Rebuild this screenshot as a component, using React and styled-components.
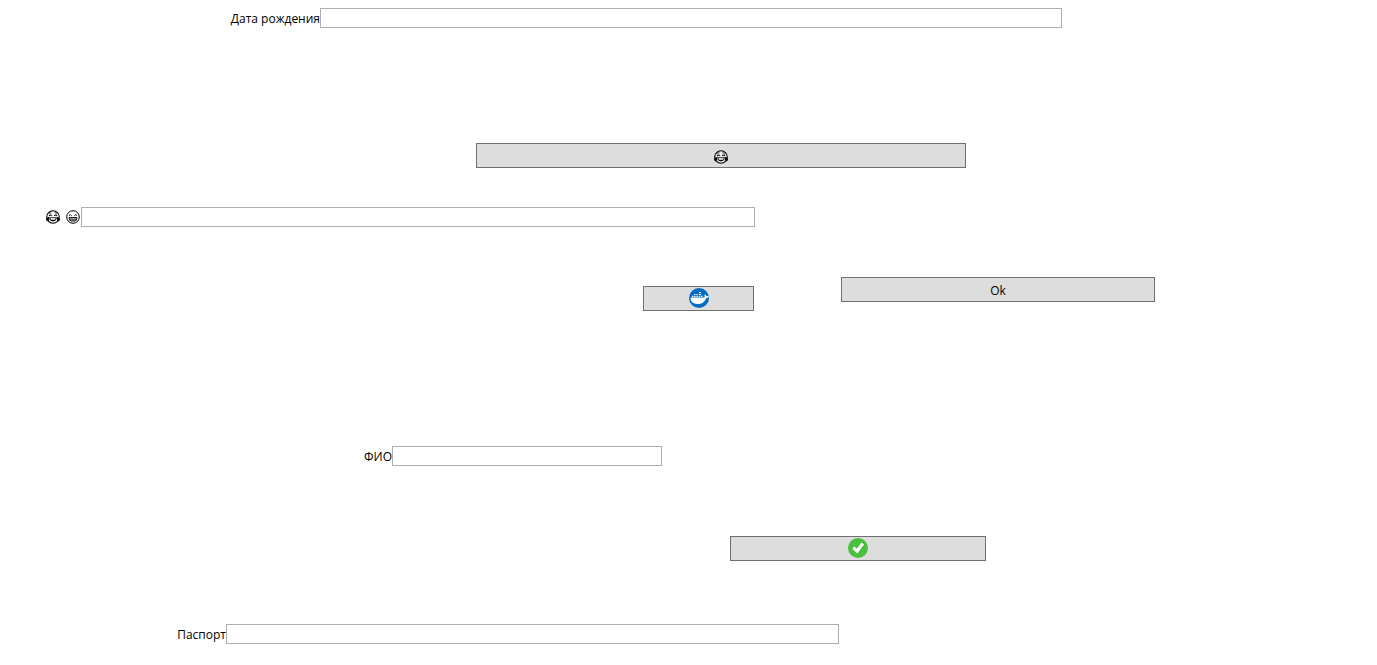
import React from 'react';
import styled, { createGlobalStyle } from 'styled-components';

const GlobalStyle = createGlobalStyle`
  *, *::before, *::after { box-sizing: border-box; }
  body {
    margin: 0;
    background: #fff;
    color: #000;
    font-family: "Segoe UI", "Open Sans", "Noto Sans", sans-serif;
    font-size: 12px;
    line-height: 16px;
  }
`;

const Page = styled.main`
  display: flex;
  flex-direction: column;
  padding: 8px 0 20px;
`;

const Field = styled.div`
  display: grid;
  grid-template-columns: ${(p) => p.$start}px minmax(0, 1fr);
  align-items: center;
  margin-top: ${(p) => p.$gap || 0}px;
  padding-right: ${(p) => p.$end}px;
`;

const Label = styled.label`
  display: flex;
  justify-content: flex-end;
  align-items: center;
  gap: 6px;
  padding: ${(p) => (p.$icons ? '0 1px 0 0' : '2px 0 0')};
  white-space: nowrap;
`;

const TextBox = styled.input`
  width: 100%;
  height: 20px;
  padding: 0 3px;
  border: 1px solid #abadb3;
  border-radius: 0;
  background: #fff;
  font: inherit;
  outline: none;
  &:focus { border-color: #569de5; }
`;

const Actions = styled.div`
  display: flex;
  align-items: flex-start;
  margin-top: ${(p) => p.$gap}px;
  padding: 0 ${(p) => p.$end}px 0 ${(p) => p.$start}px;
`;

const Button = styled.button`
  display: flex;
  flex: ${(p) => (p.$width ? `0 0 ${p.$width}px` : '1 1 0')};
  justify-content: center;
  align-items: center;
  height: 25px;
  margin: ${(p) => p.$drop || 0}px ${(p) => p.$after || 0}px 0 0;
  padding: 2px 0 0;
  border: 1px solid #707070;
  border-radius: 0;
  background: #ddd;
  color: #000;
  font: inherit;
  &:hover { background: #bee6fd; border-color: #3c7fb1; }
`;

const Icon = styled.svg`
  display: block;
  flex: none;
  width: ${(p) => p.$size}px;
  height: ${(p) => p.$size}px;
`;

const Badge = styled(Icon)`
  margin-top: -4px;
`;

const JoyFace = () => (
  <Icon $size={14} viewBox="0 0 14 14" fill="none" stroke="#000" aria-hidden="true">
    <circle cx="7" cy="7" r="6.3" fill="#fff" fillOpacity="0.4" strokeWidth="1.1" />
    <path d="M3 5.9Q4.3 4 5.7 5.9M8.3 5.9Q9.7 4 11 5.9" strokeWidth="1.1" />
    <path d="M3.2 3.4L5.4 2.7M8.6 2.7L10.8 3.4" strokeWidth="0.8" />
    <path d="M3.8 7.7H10.2Q10.2 10.9 7 11.1Q3.8 10.9 3.8 7.7Z" fill="#fff" strokeWidth="0.8" />
    <path d="M4.2 9.8H9.8Q9.2 11.1 7 11.1Q4.8 11.1 4.2 9.8Z" fill="#000" stroke="none" />
    <path d="M3.4 6.7Q0.1 7.4 0.1 9.5Q0.3 11.4 2 11.1Q3.6 10.4 3.4 6.7ZM10.6 6.7Q13.9 7.4 13.9 9.5Q13.7 11.4 12 11.1Q10.4 10.4 10.6 6.7Z" fill="#000" stroke="none" />
  </Icon>
);

const BeamFace = () => (
  <Icon $size={14} viewBox="0 0 14 14" fill="none" stroke="#000" aria-hidden="true">
    <circle cx="7" cy="7" r="6.3" strokeWidth="1" />
    <path d="M3 5.7Q4.3 3.7 5.7 5.7M8.3 5.7Q9.7 3.7 11 5.7" strokeWidth="0.9" />
    <path d="M3 7.5H11Q11 11 8.8 11.1H5.2Q3 11 3 7.5Z" fill="#000" fillOpacity="0.12" strokeWidth="0.9" />
    <path d="M3.3 9.3H10.7M5.1 7.6V11M7 7.6V11M8.9 7.6V11" strokeWidth="0.5" />
  </Icon>
);

const WhaleIcon = () => (
  <Badge $size={20} viewBox="0 0 20 20" aria-hidden="true">
    <circle cx="10" cy="10" r="10" fill="#066bc3" />
    <path
      fill="#fff"
      d="M1.6 9.6H14.7Q15.8 9.4 15.8 8.5Q15.1 7.5 15.9 6.3Q17.1 7 17.2 8.2Q18.7 7.8 20 8.8Q19.2 10.2 17 10.2C15.6 14.2 12.7 16 8.6 16C4.2 16 1.4 14 1.6 9.6Z"
    />
    <path fill="#fff" d="M10 4H12V5.2H10ZM5 6H6.4V7H5ZM7.4 6H8.8V7H7.4ZM10 6H12V7H10ZM3 7.8H4.4V9H3ZM5.2 7.8H6.6V9H5.2ZM7.4 7.8H8.8V9H7.4ZM9.8 7.8H11.2V9H9.8ZM12 7.8H13.6V9H12Z" />
  </Badge>
);

const CheckIcon = () => (
  <Badge $size={20} viewBox="0 0 20 20" aria-hidden="true">
    <circle cx="10" cy="10" r="10" fill="#4bbf3e" />
    <path d="M4.2 10.6L6.5 8.4L8.8 10.8L13.5 4.5L16 6.4L9.3 15.4Z" fill="#fff" />
  </Badge>
);

export default function App() {
  return (
    <>
      <GlobalStyle />
      <Page>
        <Field $start={320} $end={315}>
          <Label htmlFor="birth">Дата рождения</Label>
          <TextBox id="birth" type="text" />
        </Field>
        <Actions $gap={115} $start={476} $end={411}>
          <Button type="button" aria-label="Joy"><JoyFace /></Button>
        </Actions>
        <Field $gap={39} $start={81} $end={622}>
          <Label htmlFor="mood" $icons aria-label="Mood"><JoyFace /><BeamFace /></Label>
          <TextBox id="mood" type="text" />
        </Field>
        <Actions $gap={50} $start={643} $end={222}>
          <Button type="button" $width={111} $drop={9} $after={87} aria-label="Docker"><WhaleIcon /></Button>
          <Button type="button">Ok</Button>
        </Actions>
        <Field $gap={135} $start={392} $end={715}>
          <Label htmlFor="name">ФИО</Label>
          <TextBox id="name" type="text" />
        </Field>
        <Actions $gap={70} $start={730} $end={391}>
          <Button type="button" aria-label="Confirm"><CheckIcon /></Button>
        </Actions>
        <Field $gap={63} $start={226} $end={538}>
          <Label htmlFor="passport">Паспорт</Label>
          <TextBox id="passport" type="text" />
        </Field>
      </Page>
    </>
  );
}
